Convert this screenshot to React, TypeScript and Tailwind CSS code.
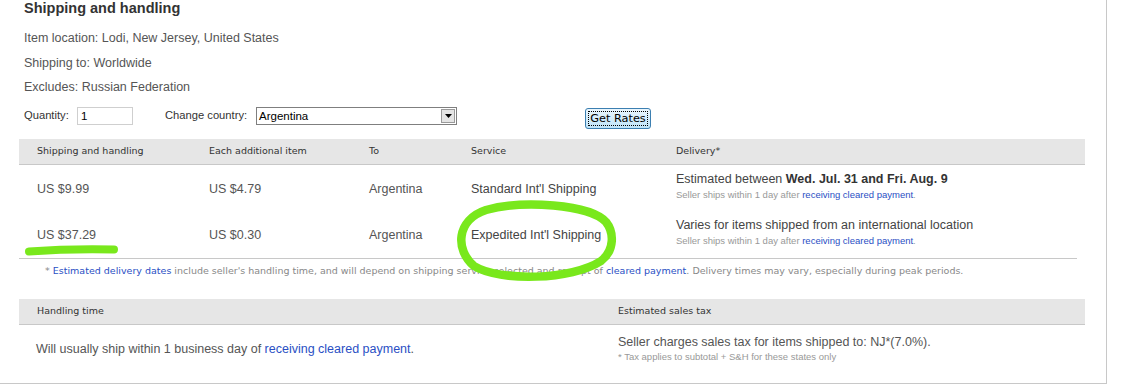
import React from "react";

const arial = "font-['Liberation_Sans',Arial,sans-serif]";
const verd = "font-['DejaVu_Sans',Verdana,sans-serif]";

function HeaderCell({ children }: { children: React.ReactNode }) {
  return <div className={`pl-[18px] ${verd} text-[9.5px] text-[#333]`}>{children}</div>;
}

function Row({
  price,
  each,
  service,
  line1,
  bordered,
  h,
}: {
  price: string;
  each: string;
  service: string;
  line1: React.ReactNode;
  bordered?: boolean;
  h: string;
}) {
  return (
    <div
      className={`grid grid-cols-[172px_160px_102px_205px_1fr] items-center ${h} ${
        bordered ? "border-b border-[#c8c8c8]" : ""
      }`}
    >
      <div className="pl-[18px] pt-[2px] text-[12.5px] text-[#555]">{price}</div>
      <div className="pl-[18px] pt-[2px] text-[12.5px] text-[#555]">{each}</div>
      <div className="pl-[18px] pt-[2px] text-[12.5px] text-[#555]">Argentina</div>
      <div className="pl-[18px] pt-[2px] text-[12.5px] text-[#444]">{service}</div>
      <div className="pl-[18px] pb-[3px] flex flex-col">
        <div className="text-[12.5px] leading-[15px] text-[#444]">{line1}</div>
        <div className="text-[9.5px] leading-[15px] text-[#999]">
          Seller ships within 1 day after <span className="text-[#2a4fc4]">receiving cleared payment</span>.
        </div>
      </div>
    </div>
  );
}

export default function App() {
  return (
    <div className={`relative w-[1125px] h-[392px] bg-white overflow-hidden ${arial}`}>
      <div className="w-[1107px] h-[384px] border-r border-b border-[#c8c8c8] flex flex-col">
        <div className="pl-[24px] h-[17px] leading-[17px] text-[14.5px] font-bold text-[#333]">
          Shipping and handling
        </div>
        <div className="pl-[24px] mt-[9px] text-[12.5px] text-[#555] flex flex-col">
          <div className="h-[24.5px] leading-[24.5px]">Item location: Lodi, New Jersey, United States</div>
          <div className="h-[24.5px] leading-[24.5px]">Shipping to: Worldwide</div>
          <div className="h-[24.5px] leading-[24.5px]">Excludes: Russian Federation</div>
        </div>

        {/* Quantity row */}
        <div className="pl-[24px] mt-[7.5px] flex items-start h-[22px]">
          <div className="w-[53px] h-[17px] leading-[17px] text-[11.2px] text-[#333]">Quantity:</div>
          <div className="w-[56px] h-[18px] border border-[#cfcfcf] pl-[3px] leading-[16px] text-[11.5px] text-black">
            1
          </div>
          <div className="ml-[32px] w-[91px] h-[17px] leading-[17px] text-[11.2px] text-[#333]">
            Change country:
          </div>
          <div className="w-[201px] h-[18px] border border-[#7f7f7f] flex items-center justify-between">
            <span className="pl-[2px] text-[11.5px] text-black leading-[16px]">Argentina</span>
            <span className="mr-[1px] w-[14px] h-[14px] border border-[#9a9a9a] bg-[#e4e4e4] flex items-center justify-center">
              <svg width="7" height="4" viewBox="0 0 7 4">
                <path d="M0 0 L7 0 L3.5 4 Z" fill="#000" />
              </svg>
            </span>
          </div>
          <div className="ml-[128px] mt-[1px] w-[66px] h-[21px] rounded-[3px] border border-[#3c7fb1] bg-gradient-to-b from-[#eaf6fd] to-[#bfe4f9] p-[2px]">
            <div className={`h-full border border-dotted border-black flex items-center justify-center ${verd} text-[11.3px] text-black leading-none`}>
              Get Rates
            </div>
          </div>
        </div>

        {/* Shipping table */}
        <div className="ml-[19px] mt-[10px] w-[1066px] h-[26px] bg-[#e6e6e6] border-b border-[#c8c8c8] grid grid-cols-[172px_160px_102px_205px_1fr] items-center">
          <HeaderCell>Shipping and handling</HeaderCell>
          <HeaderCell>Each additional item</HeaderCell>
          <HeaderCell>To</HeaderCell>
          <HeaderCell>Service</HeaderCell>
          <HeaderCell>Delivery*</HeaderCell>
        </div>
        <div className="ml-[19px] w-[1058px] flex flex-col">
          <Row
            h="h-[46px]"
            price="US $9.99"
            each="US $4.79"
            service="Standard Int'l Shipping"
            line1={
              <>
                Estimated between <b className="text-[#333]">Wed. Jul. 31 and Fri. Aug. 9</b>
              </>
            }
          />
          <Row
            h="h-[48px]"
            bordered
            price="US $37.29"
            each="US $0.30"
            service="Expedited Int'l Shipping"
            line1="Varies for items shipped from an international location"
          />
          <div className={`pl-[26px] pt-[1px] h-[22px] leading-[22px] ${verd} text-[9.5px] text-[#888] whitespace-nowrap`}>
            * <span className="text-[#2a4fc4]">Estimated delivery dates</span> include seller's handling time, and
            will depend on shipping service selected and receipt of{" "}
            <span className="text-[#2a4fc4]">cleared payment</span>. Delivery times may vary, especially during peak
            periods.
          </div>
        </div>

        {/* Handling / tax table */}
        <div className="ml-[19px] mt-[18px] w-[1066px] h-[26px] bg-[#e6e6e6] border-b border-[#c8c8c8] grid grid-cols-[581px_1fr] items-center">
          <HeaderCell>Handling time</HeaderCell>
          <HeaderCell>Estimated sales tax</HeaderCell>
        </div>
        <div className="ml-[19px] w-[1066px] grid grid-cols-[581px_1fr]">
          <div className="pl-[17px] pt-[16px] text-[12.5px] leading-[16px] text-[#555]">
            Will usually ship within 1 business day of{" "}
            <span className="text-[#2a4fc4]">receiving cleared payment</span>.
          </div>
          <div className="pl-[18px] pt-[9px] flex flex-col">
            <div className="text-[12.5px] leading-[16px] text-[#555]">
              Seller charges sales tax for items shipped to: NJ*(7.0%).
            </div>
            <div className="text-[9.5px] leading-[14px] text-[#999]">
              * Tax applies to subtotal + S&amp;H for these states only
            </div>
          </div>
        </div>
      </div>

      {/* Green hand-drawn annotations */}
      <svg
        className="absolute left-0 top-0 pointer-events-none"
        width="1125"
        height="392"
        viewBox="0 0 1125 392"
      >
        <path
          d="M29 251.5 Q 70 248.5 114 249.5"
          stroke="#79e81c"
          strokeWidth="8"
          fill="none"
          strokeLinecap="round"
        />
        <path
          d="M606 222 C 590 204, 522 200, 486 210 C 456 220, 455 250, 474 266 C 500 282, 572 280, 601 261 C 615 250, 614 232, 606 222"
          stroke="#79e81c"
          strokeWidth="8.5"
          fill="none"
          strokeLinecap="round"
        />
      </svg>
    </div>
  );
}
